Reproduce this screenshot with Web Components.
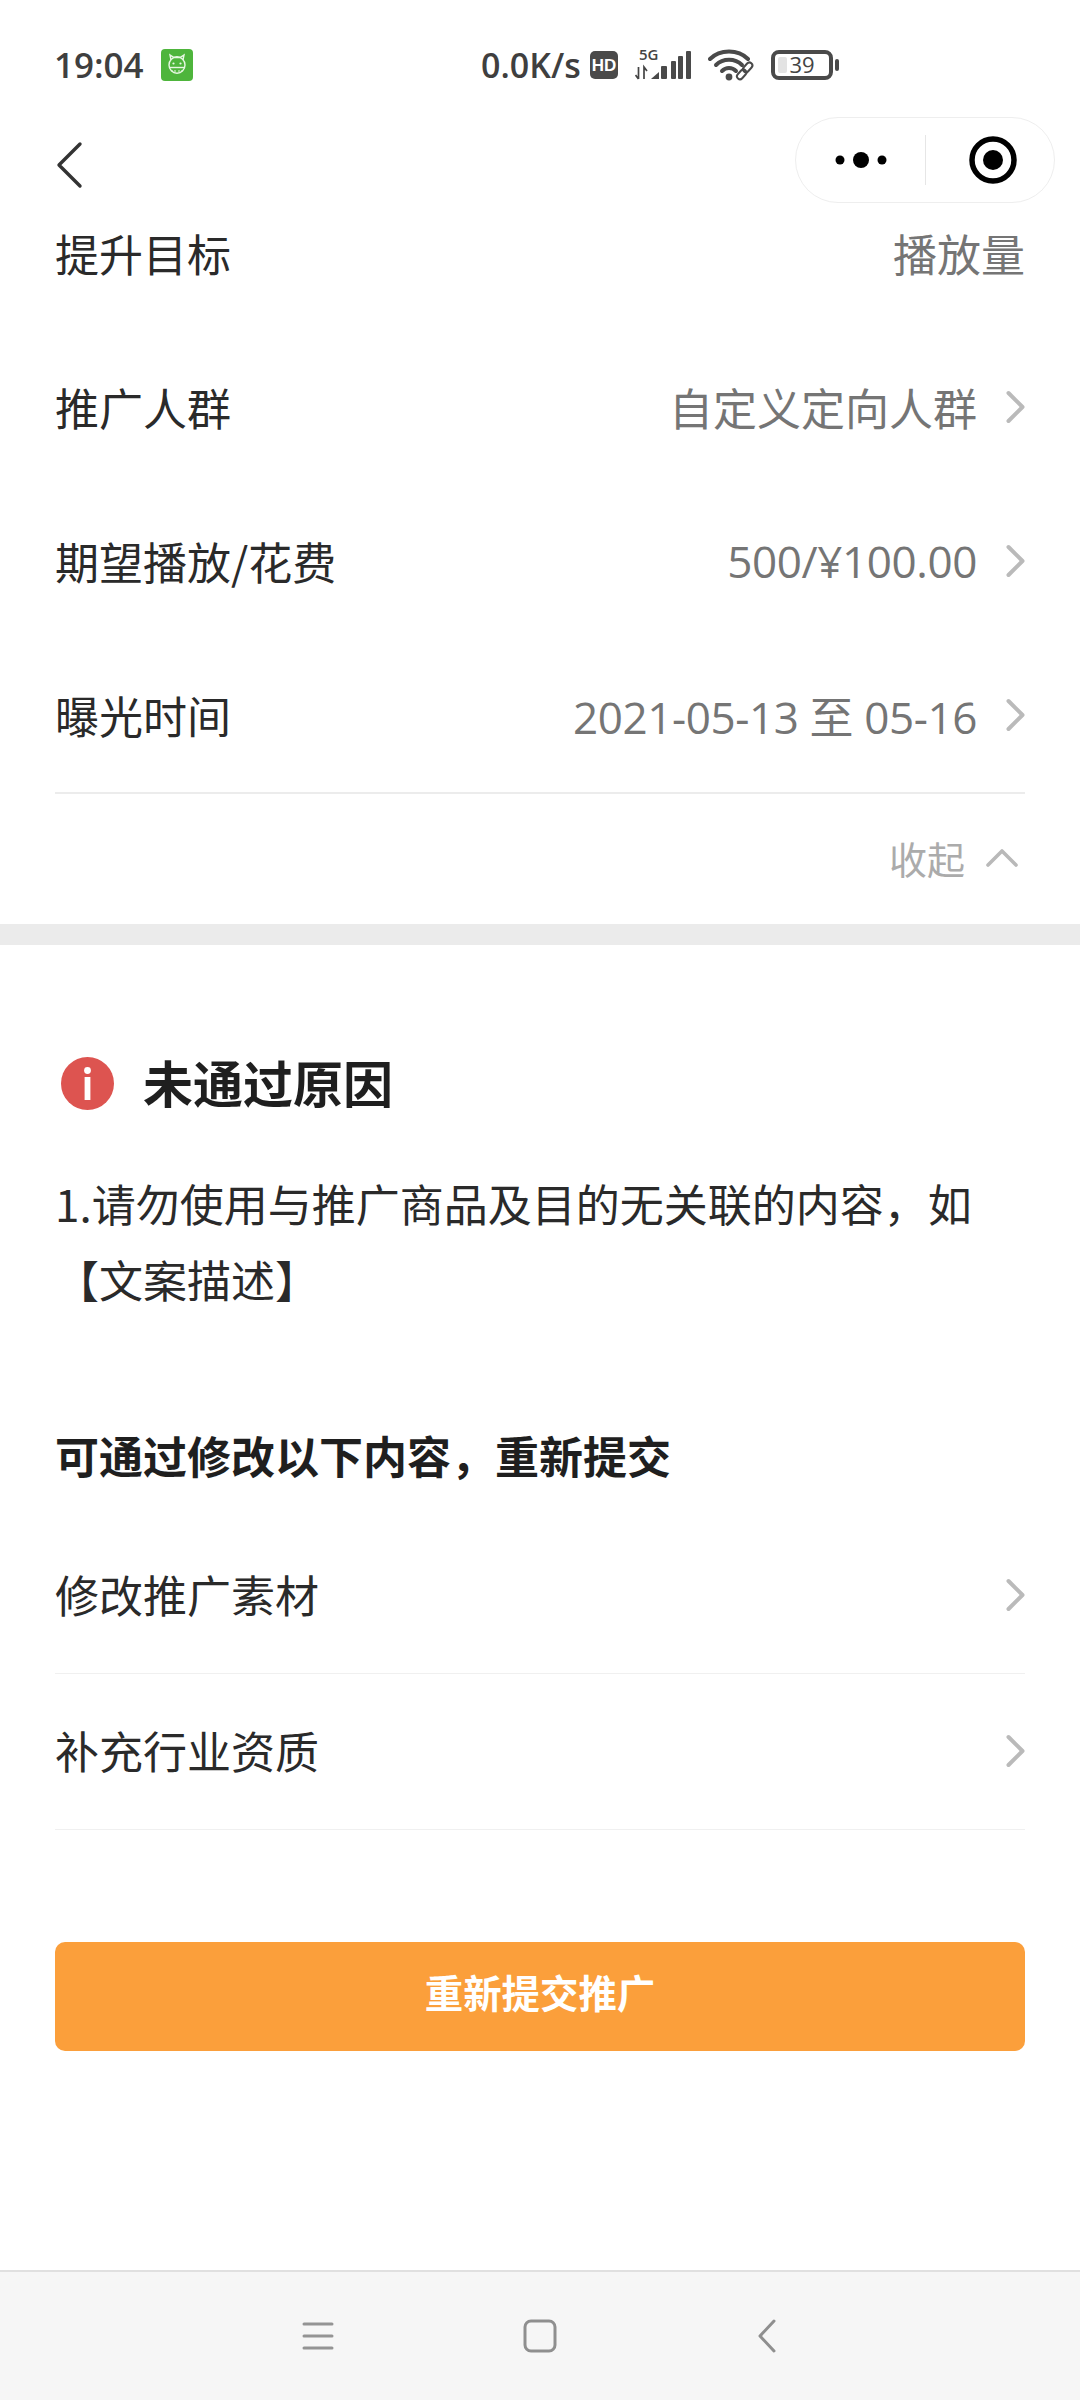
<!DOCTYPE html>
<html lang="zh">
<head>
<meta charset="utf-8">
<title>推广详情</title>
<style>
    html, body {
        margin: 0;
        background: #fff;
    }

    body {
        width: 1080px;
        height: 2400px;
        display: flex;
        flex-direction: column;
        overflow: hidden;
        font-family: "Noto Sans CJK SC", "Noto Sans", sans-serif;
        color: #2a2a2a;
    }
</style>
</head>
<body>
<status-bar></status-bar>
<mini-header></mini-header>

<detail-row label="提升目标" value="播放量" plain></detail-row>
<detail-row label="推广人群" value="自定义定向人群"></detail-row>
<detail-row label="期望播放/花费" value="500/¥100.00" dense></detail-row>
<detail-row label="曝光时间" value="2021-05-13 至 05-16" dense></detail-row>

<collapse-toggle>收起</collapse-toggle>
<band-divider></band-divider>

<reason-card heading="未通过原因">1.请勿使用与推广商品及目的无关联的内容，如<br>【文案描述】</reason-card>

<fix-list heading="可通过修改以下内容，重新提交">
    <link-row>修改推广素材</link-row>
    <link-row>补充行业资质</link-row>
</fix-list>

<primary-button>重新提交推广</primary-button>
<system-nav></system-nav>

<script>
const statusBarTemplate = document.createElement('template');
statusBarTemplate.innerHTML = `
    <style>
        :host {
            display: flex;
            flex: none;
            height: 106px;
            padding: 23px 0 0 54px;
            box-sizing: border-box;
            align-items: center;
            color: #3f3f3f;
            font-family: "Open Sans", "Noto Sans", sans-serif;
        }

        .time {
            font-size: 35px;
            font-weight: 600;
            width: 107px;
        }

        .speed {
            font-size: 34px;
            font-weight: 600;
            margin-left: 288px;
            width: 107px;
        }

        svg {
            display: block;
            flex: none;
        }
    </style>
    <span class="time">19:04</span>
    <svg width="32" height="32" viewBox="0 0 32 32">
        <rect width="32" height="32" rx="4" fill="#4eb53c"/>
        <g fill="none" stroke="#e8f7e3" stroke-width="1.4">
            <path d="M10 11 L9 6 L13 8.5 H19 L23 6 L22 11"/>
            <ellipse cx="16" cy="16" rx="8" ry="8.2"/>
            <path d="M8.5 18.5 H23.5"/>
            <path d="M11 21 v1.5 M14 21 v2 M18 21 v2 M21 21 v1.5" stroke-width="1"/>
        </g>
        <circle cx="12.5" cy="14.5" r="1.1" fill="#e8f7e3"/>
        <circle cx="19.5" cy="14.5" r="1.1" fill="#e8f7e3"/>
    </svg>
    <span class="speed">0.0K/s</span>
    <svg width="28" height="28" viewBox="0 0 28 28" style="margin-left:2px">
        <rect width="28" height="28" rx="5" fill="#4a4a4a"/>
        <text x="14" y="20" font-family="Liberation Sans, sans-serif" font-size="17" font-weight="700" fill="#fff" text-anchor="middle">HD</text>
    </svg>
    <svg width="57" height="38" viewBox="0 -6 57 38" style="margin:0 0 8px 17px">
        <text x="4" y="12" font-family="Open Sans, sans-serif" font-size="15" font-weight="600" fill="#444">5G</text>
        <g stroke="#444" stroke-width="1.7" fill="none">
            <path d="M3.5 31 V19 M0.5 27 L3.5 31 M9 31 V19 L12 23"/>
        </g>
        <g fill="#4a4a4a">
            <path d="M16 31 L24 24 V31 Z"/>
            <rect x="26" y="18" width="6" height="13" rx="1"/>
            <rect x="36" y="13" width="5" height="18" rx="1"/>
            <rect x="43" y="8" width="5" height="23" rx="1"/>
            <rect x="51" y="3" width="5" height="28" rx="1"/>
        </g>
    </svg>
    <svg width="48" height="32" viewBox="0 0 48 32" style="margin-left:16px">
        <g fill="none" stroke="#4a4a4a" stroke-width="4" stroke-linecap="round">
            <path d="M2 10 C12 0 30 0 40 10"/>
            <path d="M8 16 C15 9 27 9 34 16"/>
            <path d="M14 22 C18 18 24 18 28 22"/>
        </g>
        <circle cx="21" cy="28" r="3.4" fill="#4a4a4a"/>
        <g fill="none" stroke="#4a4a4a" stroke-width="2">
            <rect x="37" y="13" width="6" height="11" rx="3" transform="rotate(42 40 18)"/>
            <rect x="31" y="20" width="6" height="11" rx="3" transform="rotate(42 34 25)"/>
        </g>
    </svg>
    <svg width="68" height="30" viewBox="0 0 68 30" style="margin-left:15px">
        <rect x="2" y="2" width="58" height="26" rx="6" fill="#fff" stroke="#4a4a4a" stroke-width="4"/>
        <rect x="7" y="7" width="9" height="16" rx="2" fill="#e3e3e3"/>
        <text x="31" y="23" font-family="Open Sans, sans-serif" font-size="22" fill="#444" text-anchor="middle">39</text>
        <rect x="64" y="9" width="4" height="12" rx="2" fill="#4a4a4a"/>
    </svg>
`;

class StatusBar extends HTMLElement {
    constructor(){
        super();

        this.attachShadow( { mode:"open" } );
        this.shadowRoot.appendChild( statusBarTemplate.content.cloneNode( true ) );
    }
}

const miniHeaderTemplate = document.createElement('template');
miniHeaderTemplate.innerHTML = `
    <style>
        :host {
            display: flex;
            flex: none;
            height: 70px;
            padding: 11px 25px 0 55px;
            box-sizing: border-box;
            justify-content: space-between;
            align-items: flex-start;
        }

        .back {
            display: block;
            margin-top: 24px;
        }

        .capsule {
            flex: none;
            width: 260px;
            height: 86px;
            box-sizing: border-box;
            border: 1px solid #eeeeee;
            border-radius: 43px;
            background: #fff;
            display: flex;
            align-items: center;
        }

        .more {
            width: 129px;
            display: flex;
            justify-content: center;
        }

        .line {
            width: 1px;
            height: 50px;
            background: #e6e6e6;
        }

        .home {
            flex: 1;
            display: flex;
            justify-content: center;
            padding-left: 6px;
        }
    </style>
    <svg class="back" width="28" height="48" viewBox="0 0 28 48">
        <path d="M25 3 L4 24 L25 45" fill="none" stroke="#333" stroke-width="3.4" stroke-linecap="round" stroke-linejoin="round"/>
    </svg>
    <div class="capsule">
        <div class="more">
            <svg width="52" height="18" viewBox="0 0 52 18">
                <circle cx="5" cy="9" r="4.5" fill="#000"/>
                <circle cx="26" cy="9" r="8" fill="#000"/>
                <circle cx="47" cy="9" r="4.5" fill="#000"/>
            </svg>
        </div>
        <div class="line"></div>
        <div class="home">
            <svg width="48" height="48" viewBox="0 0 48 48">
                <circle cx="24" cy="24" r="21" fill="none" stroke="#000" stroke-width="5.5"/>
                <circle cx="24" cy="24" r="10" fill="#000"/>
            </svg>
        </div>
    </div>
`;

class MiniHeader extends HTMLElement {
    constructor(){
        super();

        this.attachShadow( { mode:"open" } );
        this.shadowRoot.appendChild( miniHeaderTemplate.content.cloneNode( true ) );
    }
}

const chevronMarkup = `
    <svg class="chevron" width="19" height="34" viewBox="0 0 19 34">
        <path d="M2.5 3 L16.5 17 L2.5 31" fill="none" stroke="#bababa" stroke-width="4" stroke-linecap="round" stroke-linejoin="round"/>
    </svg>
`;

const detailRowTemplate = document.createElement('template');
detailRowTemplate.innerHTML = `
    <style>
        :host {
            display: flex;
            flex: none;
            height: 154px;
            margin: 0 55px;
            align-items: center;
            justify-content: space-between;
            font-size: 44px;
        }

        .value {
            color: #757575;
            font-family: "Open Sans", "Noto Sans CJK SC", sans-serif;
            font-size: 44px;
            white-space: pre;
        }

        :host([dense]) .value {
            letter-spacing: -0.4px;
        }

        .right {
            display: flex;
            align-items: center;
            gap: 29px;
        }

        .chevron {
            display: block;
        }

        :host([plain]) .chevron {
            display: none;
        }
    </style>
    <span class="label"></span>
    <div class="right">
        <span class="value"></span>
        ${ chevronMarkup }
    </div>
`;

class DetailRow extends HTMLElement {
    constructor(){
        super();

        this.attachShadow( { mode:"open" } );
        this.shadowRoot.appendChild( detailRowTemplate.content.cloneNode( true ) );
        this.shadowRoot.querySelector('.label').textContent = this.getAttribute('label');
        this.shadowRoot.querySelector('.value').textContent = this.getAttribute('value');
    }
}

const collapseToggleTemplate = document.createElement('template');
collapseToggleTemplate.innerHTML = `
    <style>
        :host {
            display: flex;
            flex: none;
            height: 132px;
            margin: 0 55px;
            box-sizing: border-box;
            border-top: 2px solid #ececec;
            padding: 0 7px 3px 0;
            align-items: center;
            justify-content: flex-end;
            gap: 21px;
            color: #ababab;
            font-size: 38px;
        }
    </style>
    <slot></slot>
    <svg width="32" height="20" viewBox="0 0 32 20">
        <path d="M2 17 L16 3 L30 17" fill="none" stroke="#b9b9b9" stroke-width="3.6" stroke-linecap="round" stroke-linejoin="round"/>
    </svg>
`;

class CollapseToggle extends HTMLElement {
    constructor(){
        super();

        this.attachShadow( { mode:"open" } );
        this.shadowRoot.appendChild( collapseToggleTemplate.content.cloneNode( true ) );
    }
}

class BandDivider extends HTMLElement {
    constructor(){
        super();

        this.attachShadow( { mode:"open" } );
        this.shadowRoot.innerHTML = `
            <style>
                :host {
                    display: block;
                    flex: none;
                    height: 21px;
                    background: #ebebeb;
                }
            </style>
        `;
    }
}

const reasonCardTemplate = document.createElement('template');
reasonCardTemplate.innerHTML = `
    <style>
        :host {
            display: block;
            flex: none;
            padding: 106px 55px 0;
        }

        .title {
            display: flex;
            align-items: center;
            height: 60px;
            gap: 29px;
            padding-left: 6px;
            font-size: 50px;
            font-weight: 700;
            color: #1f1f1f;
        }

        .body {
            margin-top: 54px;
            font-size: 44px;
            line-height: 76px;
        }

        svg {
            display: block;
            flex: none;
            margin-top: 4px;
        }
    </style>
    <div class="title">
        <svg width="53" height="53" viewBox="0 0 53 53">
            <circle cx="26.5" cy="26.5" r="26.5" fill="#dd5450"/>
            <circle cx="26.5" cy="13.5" r="3.4" fill="#fff"/>
            <rect x="23.6" y="20" width="5.8" height="23" fill="#fff"/>
        </svg>
        <span class="heading"></span>
    </div>
    <div class="body"><slot></slot></div>
`;

class ReasonCard extends HTMLElement {
    constructor(){
        super();

        this.attachShadow( { mode:"open" } );
        this.shadowRoot.appendChild( reasonCardTemplate.content.cloneNode( true ) );
        this.shadowRoot.querySelector('.heading').textContent = this.getAttribute('heading');
    }
}

const fixListTemplate = document.createElement('template');
fixListTemplate.innerHTML = `
    <style>
        :host {
            display: block;
            flex: none;
            padding: 108px 55px 0;
        }

        .heading {
            height: 60px;
            line-height: 60px;
            margin-bottom: 33px;
            font-size: 44px;
            font-weight: 700;
            color: #1f1f1f;
        }
    </style>
    <div class="heading"></div>
    <slot></slot>
`;

class FixList extends HTMLElement {
    constructor(){
        super();

        this.attachShadow( { mode:"open" } );
        this.shadowRoot.appendChild( fixListTemplate.content.cloneNode( true ) );
        this.shadowRoot.querySelector('.heading').textContent = this.getAttribute('heading');
    }
}

const linkRowTemplate = document.createElement('template');
linkRowTemplate.innerHTML = `
    <style>
        :host {
            display: flex;
            height: 156px;
            box-sizing: border-box;
            border-bottom: 1px solid #f0f0f0;
            align-items: center;
            justify-content: space-between;
            font-size: 44px;
            padding-bottom: 4px;
        }

        .chevron {
            display: block;
            margin-top: 3px;
        }
    </style>
    <slot></slot>
    ${ chevronMarkup }
`;

class LinkRow extends HTMLElement {
    constructor(){
        super();

        this.attachShadow( { mode:"open" } );
        this.shadowRoot.appendChild( linkRowTemplate.content.cloneNode( true ) );
    }
}

const primaryButtonTemplate = document.createElement('template');
primaryButtonTemplate.innerHTML = `
    <style>
        :host {
            display: flex;
            flex: none;
            height: 109px;
            margin: 112px 55px 0;
            border-radius: 10px;
            background: #fb9f3b;
            color: #fff;
            font-size: 38.4px;
            font-weight: 700;
            align-items: center;
            justify-content: center;
            padding-bottom: 12px;
            box-sizing: border-box;
        }
    </style>
    <slot></slot>
`;

class PrimaryButton extends HTMLElement {
    constructor(){
        super();

        this.attachShadow( { mode:"open" } );
        this.shadowRoot.appendChild( primaryButtonTemplate.content.cloneNode( true ) );
    }
}

const systemNavTemplate = document.createElement('template');
systemNavTemplate.innerHTML = `
    <style>
        :host {
            display: grid;
            grid-template-columns: 334px 223px 219px;
            margin-top: auto;
            flex: none;
            height: 130px;
            box-sizing: border-box;
            border-top: 2px solid #e0e0e0;
            background: #f6f6f6;
            align-items: center;
            justify-items: end;
        }

        svg {
            display: block;
        }
    </style>
    <svg width="32" height="30" viewBox="0 0 32 30">
        <path d="M2 3 H30 M2 15 H30 M2 27 H30" fill="none" stroke="#949494" stroke-width="3" stroke-linecap="round"/>
    </svg>
    <svg width="34" height="34" viewBox="0 0 34 34">
        <rect x="2" y="2" width="30" height="30" rx="6" fill="none" stroke="#8f8f8f" stroke-width="3"/>
    </svg>
    <svg width="18" height="34" viewBox="0 0 18 34">
        <path d="M16 2 L2 17 L16 32" fill="none" stroke="#8f8f8f" stroke-width="3" stroke-linecap="round" stroke-linejoin="round"/>
    </svg>
`;

class SystemNav extends HTMLElement {
    constructor(){
        super();

        this.attachShadow( { mode:"open" } );
        this.shadowRoot.appendChild( systemNavTemplate.content.cloneNode( true ) );
    }
}

window.customElements.define( 'status-bar', StatusBar );
window.customElements.define( 'mini-header', MiniHeader );
window.customElements.define( 'detail-row', DetailRow );
window.customElements.define( 'collapse-toggle', CollapseToggle );
window.customElements.define( 'band-divider', BandDivider );
window.customElements.define( 'reason-card', ReasonCard );
window.customElements.define( 'fix-list', FixList );
window.customElements.define( 'link-row', LinkRow );
window.customElements.define( 'primary-button', PrimaryButton );
window.customElements.define( 'system-nav', SystemNav );
</script>
</body>
</html>
